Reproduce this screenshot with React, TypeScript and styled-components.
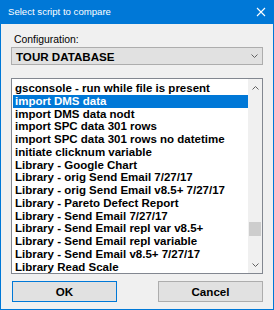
import styled, { createGlobalStyle } from "styled-components"

const GlobalStyle = createGlobalStyle`
  html, body {
    margin: 0;
    padding: 0;
    background: #f0f0f0;
  }
  * {
    box-sizing: border-box;
  }
`

const ITEMS = [
  "gsconsole - run while file is present",
  "import DMS data",
  "import DMS data nodt",
  "import SPC data 301 rows",
  "import SPC data 301 rows no datetime",
  "initiate clicknum variable",
  "Library - Google Chart",
  "Library - orig Send Email 7/27/17",
  "Library - orig Send Email v8.5+ 7/27/17",
  "Library - Pareto Defect Report",
  "Library - Send Email 7/27/17",
  "Library - Send Email repl var v8.5+",
  "Library - Send Email repl variable",
  "Library - Send Email v8.5+ 7/27/17",
  "Library Read Scale",
]

const Window = styled.div`
  width: 274px;
  height: 310px;
  border: 1px solid #0078d7;
  border-top: 0;
  display: flex;
  flex-direction: column;
  background: #f0f0f0;
  font-family: "Liberation Sans", Arial, sans-serif;
`

const TitleBar = styled.div`
  height: 24px;
  flex: none;
  background: #0078d7;
  color: #fff;
  display: flex;
  align-items: center;
  justify-content: space-between;
  padding: 0 7px 1px 7px;
  font-size: 9.6px;
`

const CloseIcon = () => (
  <svg width="10" height="10" viewBox="0 0 10 10">
    <path d="M1 1 L9 9 M9 1 L1 9" stroke="#fff" strokeWidth="1.1" />
  </svg>
)

const Body = styled.div`
  flex: 1;
  display: flex;
  flex-direction: column;
  padding: 9px 10px 0 10px;
`

const Label = styled.div`
  font-size: 10.4px;
  line-height: 13px;
  color: #000;
  padding-left: 3px;
  margin-bottom: 1px;
`

const Combo = styled.div`
  height: 18px;
  border: 1px solid #adadad;
  background: #e1e1e1;
  display: flex;
  align-items: center;
  justify-content: space-between;
  padding: 0 4px 0 4px;
  font-size: 11.6px;
  font-weight: bold;
  color: #000;
`

const Chevron = ({ up }: { up?: boolean }) => (
  <svg width="7" height="4" viewBox="0 0 7 4">
    <path
      d={up ? "M0.5 3.5 L3.5 0.5 L6.5 3.5" : "M0.5 0.5 L3.5 3.5 L6.5 0.5"}
      fill="none"
      stroke="#606060"
      strokeWidth="1"
    />
  </svg>
)

const ListBox = styled.div`
  margin-top: 13px;
  height: 196px;
  border: 1px solid #828790;
  background: #fff;
  display: flex;
`

const Rows = styled.div`
  flex: 1;
  padding: 3px 0 0 1px;
  overflow: hidden;
`

const Row = styled.div<{ $selected?: boolean }>`
  height: 12.75px;
  line-height: 12.75px;
  padding-left: 2px;
  font-size: 11.5px;
  font-weight: bold;
  white-space: nowrap;
  color: ${p => (p.$selected ? "#fff" : "#000")};
  background: ${p => (p.$selected ? "#0078d7" : "transparent")};
`

const ScrollBar = styled.div`
  width: 14px;
  flex: none;
  background: #f0f0f0;
  display: flex;
  flex-direction: column;
`

const ScrollButton = styled.div`
  height: 17px;
  flex: none;
  display: flex;
  align-items: center;
  justify-content: center;
`

const Track = styled.div`
  flex: 1;
`

const Thumb = styled.div<{ $offset: number }>`
  margin: ${p => p.$offset}px 1px 0 1px;
  height: 14px;
  background: #cdcdcd;
`

const ButtonRow = styled.div`
  margin-top: 7px;
  display: flex;
  justify-content: space-between;
  padding-left: 1px;
`

const Button = styled.div<{ $default?: boolean }>`
  width: 105px;
  height: 21px;
  border: 1px solid ${p => (p.$default ? "#0078d7" : "#adadad")};
  background: #e1e1e1;
  display: flex;
  align-items: center;
  justify-content: center;
  font-size: 11.6px;
  font-weight: bold;
  color: #000;
`

export default function App() {
  return (
    <>
      <GlobalStyle />
      <Window>
        <TitleBar>
          <span>Select script to compare</span>
          <CloseIcon />
        </TitleBar>
        <Body>
          <Label>Configuration:</Label>
          <Combo>
            <span>TOUR DATABASE</span>
            <Chevron />
          </Combo>
          <ListBox>
            <Rows>
              {ITEMS.map((item, i) => (
                <Row key={item} $selected={i === 1}>
                  {item}
                </Row>
              ))}
            </Rows>
            <ScrollBar>
              <ScrollButton>
                <Chevron up />
              </ScrollButton>
              <Track>
                <Thumb $offset={126} />
              </Track>
              <ScrollButton>
                <Chevron />
              </ScrollButton>
            </ScrollBar>
          </ListBox>
          <ButtonRow>
            <Button $default>OK</Button>
            <Button>Cancel</Button>
          </ButtonRow>
        </Body>
      </Window>
    </>
  )
}
